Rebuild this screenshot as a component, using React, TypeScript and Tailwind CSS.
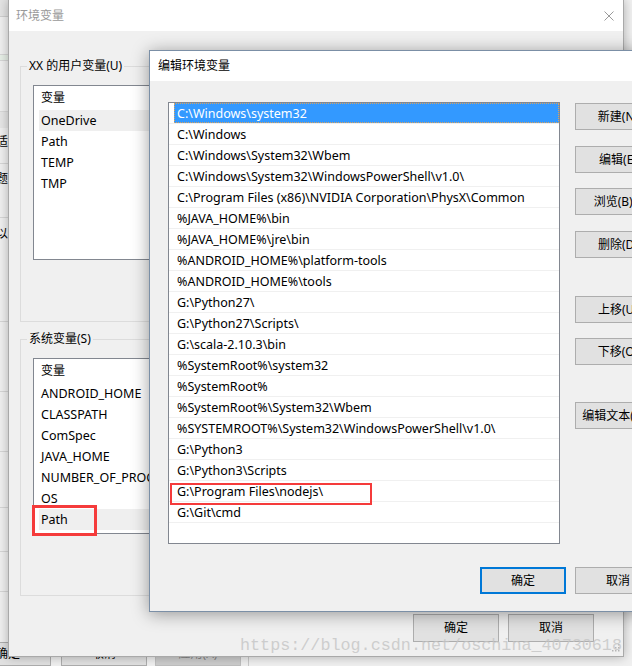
import React from 'react';

const paths = [
  'C:\\Windows\\system32',
  'C:\\Windows',
  'C:\\Windows\\System32\\Wbem',
  'C:\\Windows\\System32\\WindowsPowerShell\\v1.0\\',
  'C:\\Program Files (x86)\\NVIDIA Corporation\\PhysX\\Common',
  '%JAVA_HOME%\\bin',
  '%JAVA_HOME%\\jre\\bin',
  '%ANDROID_HOME%\\platform-tools',
  '%ANDROID_HOME%\\tools',
  'G:\\Python27\\',
  'G:\\Python27\\Scripts\\',
  'G:\\scala-2.10.3\\bin',
  '%SystemRoot%\\system32',
  '%SystemRoot%',
  '%SystemRoot%\\System32\\Wbem',
  '%SYSTEMROOT%\\System32\\WindowsPowerShell\\v1.0\\',
  'G:\\Python3',
  'G:\\Python3\\Scripts',
  'G:\\Program Files\\nodejs\\',
  'G:\\Git\\cmd',
];

const userVars = ['OneDrive', 'Path', 'TEMP', 'TMP'];
const sysVars = ['ANDROID_HOME', 'CLASSPATH', 'ComSpec', 'JAVA_HOME', 'NUMBER_OF_PROCESSORS', 'OS', 'Path'];

// right-hand buttons of the edit dialog, with the gap above each one
const sideButtons = [
  { label: '新建(N)', gap: 'mt-0' },
  { label: '编辑(E)', gap: 'mt-[16px]' },
  { label: '浏览(B)...', gap: 'mt-[15px]' },
  { label: '删除(D)', gap: 'mt-[16px]' },
  { label: '上移(U)', gap: 'mt-[38px]' },
  { label: '下移(O)', gap: 'mt-[15px]' },
  { label: '编辑文本(T)...', gap: 'mt-[37px]' },
];

function WinButton({
  children,
  className = '',
  focused = false,
}: {
  children: React.ReactNode;
  className?: string;
  focused?: boolean;
}) {
  return (
    <div
      className={`flex shrink-0 items-center justify-center whitespace-nowrap bg-[#e1e1e1] ${
        focused ? 'border-2 border-[#0078d7]' : 'border border-[#adadad]'
      } ${className}`}
    >
      {children}
    </div>
  );
}

function VarList({
  items,
  selected,
  heightClass,
  marker,
}: {
  items: string[];
  selected: string;
  heightClass: string;
  marker?: boolean;
}) {
  return (
    <div className={`relative mt-[11px] ${heightClass}`}>
      <div className="h-full overflow-hidden border border-[#828790] bg-white text-[12.5px]">
        <div className="flex h-[24px] items-center pl-[7px] text-[12px]">变量</div>
        {items.map((name, i) => (
          <div key={name + i} className="h-[21px] pl-[5px]">
            <div
              className={`flex h-full items-center whitespace-nowrap pl-[2px] pt-[1px] ${
                name === selected ? 'bg-[#efefef]' : ''
              }`}
            >
              {name}
            </div>
          </div>
        ))}
      </div>
      {marker && (
        <div className="absolute left-[-1px] top-[147px] h-[31px] w-[65px] border-[3px] border-[#f53b3b]" />
      )}
    </div>
  );
}

function BackWindow() {
  return (
    <div className="absolute inset-0 flex flex-col bg-[#f0f0f0]">
      <div className="flex h-[653px] w-[8px] flex-col overflow-hidden">
        <div className="h-[17px] border-b border-[#cfcfcf] bg-[#e4e4e4]" />
        <div className="h-[38px] border-b border-[#d6d6d6]" />
        <div className="h-[6px] border-b border-[#d6d6d6] bg-[#e7efe7]" />
        <div className="h-[51px] border-b border-[#d9d9d9]" />
        <div className="h-[16px] bg-[#e6e6e6]" />
        <div className="-ml-[4px] flex h-[28px] items-center whitespace-nowrap">适</div>
        <div className="h-[8px] border-b border-[#d6d6d6]" />
        <div className="-ml-[4px] flex h-[30px] items-center whitespace-nowrap">题</div>
        <div className="h-[24px] border-b border-[#d6d6d6]" />
        <div className="-ml-[4px] flex h-[32px] items-center whitespace-nowrap">以</div>
        <div className="h-[72px] border-b border-[#d6d6d6]" />
        <div className="h-[70px] border-b border-[#d6d6d6]" />
        <div className="h-[60px] border-b border-[#d6d6d6]" />
        <div className="h-[56px] border-b border-[#d6d6d6]" />
        <div className="h-[44px] border-b border-[#d6d6d6]" />
        <div className="h-[40px] border-b border-[#d6d6d6]" />
      </div>
      <div className="flex h-[24px] items-stretch">
        <WinButton className="-ml-[35px] w-[86px]">确定</WinButton>
        <WinButton className="ml-[10px] w-[86px]">取消</WinButton>
        <WinButton className="ml-[8px] w-[86px] !border-[#bfbfbf] !bg-[#cccccc] text-[#838383]">应用(A)</WinButton>
        <div className="ml-[7px] border-l border-[#c8c8c8]" />
      </div>
    </div>
  );
}

function EnvWindow() {
  return (
    <div className="absolute left-[8px] top-0 flex h-[657px] w-[616px] flex-col border-x border-b border-[#a9a9a9] bg-[#f0f0f0] shadow-[0_0_10px_rgba(0,0,0,0.28)]">
      <div className="flex h-[31px] shrink-0 items-center justify-between bg-white pl-[7px] pr-[9px]">
        <span className="text-[#999999]">环境变量</span>
        <svg width="10" height="10" viewBox="0 0 10 10">
          <path d="M0.5 0.5 L9.5 9.5 M9.5 0.5 L0.5 9.5" stroke="#9a9a9a" strokeWidth="1" fill="none" />
        </svg>
      </div>
      <div className="flex flex-col px-[11px]">
        <fieldset className="mt-[27px] border border-[#dcdcdc] pb-[61px] pl-[12px] pr-[12px]">
          <legend className="-ml-[6px] px-[2px] leading-[16px]">XX 的用户变量(U)</legend>
          <VarList items={userVars} selected="OneDrive" heightClass="h-[175px]" />
        </fieldset>
        <fieldset className="mt-[9px] border border-[#dcdcdc] pb-[61px] pl-[12px] pr-[12px]">
          <legend className="-ml-[6px] px-[2px] leading-[16px]">系统变量(S)</legend>
          <VarList items={sysVars} selected="Path" heightClass="h-[176px]" marker />
        </fieldset>
        <div className="mt-[18px] flex justify-end gap-[9px] pr-[18px]">
          <WinButton className="h-[28px] w-[86px]">确定</WinButton>
          <WinButton className="h-[28px] w-[86px]">取消</WinButton>
        </div>
      </div>
      <svg className="absolute bottom-[4px] right-[3px]" width="8" height="8" viewBox="0 0 8 8">
        <g fill="#b5b5b5">
          <rect x="6" y="0" width="1.5" height="1.5" />
          <rect x="3" y="3" width="1.5" height="1.5" />
          <rect x="6" y="3" width="1.5" height="1.5" />
          <rect x="0" y="6" width="1.5" height="1.5" />
          <rect x="3" y="6" width="1.5" height="1.5" />
          <rect x="6" y="6" width="1.5" height="1.5" />
        </g>
      </svg>
    </div>
  );
}

function EditDialog() {
  return (
    <div className="absolute left-[149px] top-[50px] flex h-[562px] w-[520px] flex-col border border-[#7b8fa6] bg-[#f0f0f0] shadow-[0_2px_16px_rgba(0,0,0,0.38)]">
      <div className="flex h-[30px] shrink-0 items-center bg-white pl-[8px]">编辑环境变量</div>
      <div className="flex flex-col pl-[18px] pt-[21px]">
        <div className="flex items-start">
          <div className="relative h-[442px] w-[392px] shrink-0">
            <div className="h-full overflow-hidden border border-[#828790] bg-white text-[12.5px]">
              {paths.map((p, i) => (
                <div key={p} className="h-[21px] border-b border-[#f0f0f0] pl-[5px]">
                  <div
                    className={`flex h-full items-center whitespace-nowrap pl-[2px] pt-[3px] ${
                      i === 0 ? 'border border-dotted border-[#d9a35f] bg-[#3399ff] text-white' : 'pl-[3px]'
                    }`}
                  >
                    {p}
                  </div>
                </div>
              ))}
            </div>
            <div className="absolute left-[2px] top-[381px] h-[22px] w-[202px] border-2 border-[#f53b3b]" />
          </div>
          <div className="ml-[15px] mt-[1px] flex flex-col">
            {sideButtons.map((b) => (
              <WinButton key={b.label} className={`h-[27px] w-[86px] ${b.gap}`}>
                {b.label}
              </WinButton>
            ))}
          </div>
        </div>
        <div className="ml-[312px] mt-[23px] flex gap-[9px]">
          <WinButton focused className="h-[27px] w-[86px]">确定</WinButton>
          <WinButton className="h-[27px] w-[86px]">取消</WinButton>
        </div>
      </div>
    </div>
  );
}

export default function App() {
  return (
    <div className="relative h-[666px] w-[632px] overflow-hidden bg-[#f0f0f0] font-['Noto_Sans','Noto_Sans_CJK_SC',sans-serif] text-[12px] text-black">
      <BackWindow />
      <EnvWindow />
      <EditDialog />
      <div className="pointer-events-none absolute left-[240px] top-[636px] whitespace-nowrap font-['Liberation_Mono',monospace] text-[16.75px] leading-[20px] text-[#c4c4c4]/80">
        https://blog.csdn.net/oschina_40730618
      </div>
    </div>
  );
}
